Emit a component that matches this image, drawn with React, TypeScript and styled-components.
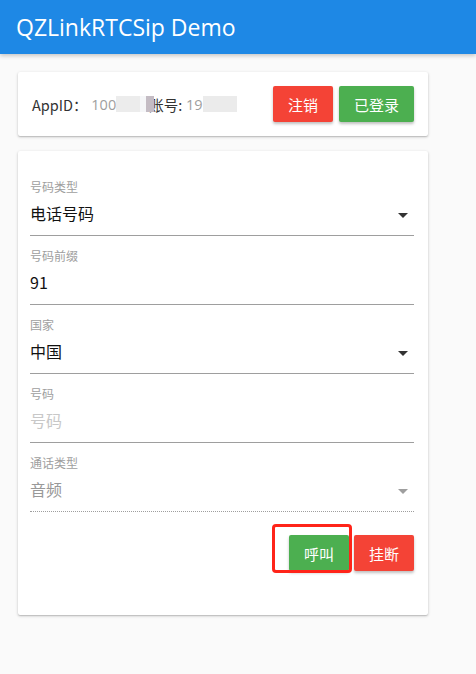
import React from "react";
import styled, { createGlobalStyle } from "styled-components";

const GlobalStyle = createGlobalStyle`
  html, body { margin: 0; padding: 0; background: #fafafa; }
  body {
    font-family: "Open Sans", "Noto Sans CJK SC", sans-serif;
    color: #333;
    width: 476px;
    min-height: 674px;
  }
  * { box-sizing: border-box; }
`;

const Header = styled.header`
  height: 54px;
  background: #1e88e5;
  display: flex;
  align-items: center;
  padding-left: 16px;
  box-shadow: 0 2px 4px rgba(0, 0, 0, 0.2);
`;

const Title = styled.h1`
  margin: 0;
  font-family: "Open Sans", "Noto Sans CJK SC", sans-serif;
  font-weight: 400;
  font-size: 23px;
  color: #fff;
`;

const Main = styled.main`
  width: 410px;
  margin: 18px 0 0 18px;
  display: flex;
  flex-direction: column;
  gap: 15px;
`;

const Card = styled.section`
  background: #fff;
  border-radius: 2px;
  box-shadow: 0 1px 3px rgba(0, 0, 0, 0.22), 0 1px 1px rgba(0, 0, 0, 0.1);
`;

const LoginCard = styled(Card)`
  height: 64px;
  display: flex;
  align-items: center;
  justify-content: space-between;
  padding: 0 14px 0 14px;
`;

const Info = styled.div`
  display: flex;
  align-items: center;
  font-size: 14.5px;
`;

const Dark = styled.span`
  color: #333;
  font-family: "Noto Sans CJK SC", sans-serif;
`;

const Grey = styled.span`
  color: #9e9e9e;
`;

const MaskedWord = styled.span`
  position: relative;
  color: #333;
  font-family: "Noto Sans CJK SC", sans-serif;
  margin-left: -5px;
`;

const Cover = styled.span`
  position: absolute;
  left: -3px;
  top: 50%;
  transform: translateY(-50%);
  width: 8px;
  height: 16px;
  background: #c4bcc4;
`;

const Mask = styled.span<{ $w: number; $c: string }>`
  display: inline-block;
  width: ${(p) => p.$w}px;
  height: 16px;
  background: ${(p) => p.$c};
`;

const ButtonRow = styled.div<{ $gap: number }>`
  display: flex;
  gap: ${(p) => p.$gap}px;
  justify-content: flex-end;
`;

const Button = styled.button<{ $color: string; $w: number }>`
  width: ${(p) => p.$w}px;
  height: 36px;
  border: none;
  border-radius: 2px;
  background: ${(p) => p.$color};
  color: #fff;
  font-family: "Noto Sans CJK SC", sans-serif;
  font-size: 15px;
  padding: 0;
  box-shadow: 0 2px 3px rgba(0, 0, 0, 0.25);
`;

const FormCard = styled(Card)`
  padding: 16px 14px 44px 12px;
`;

const Field = styled.div<{ $dotted?: boolean }>`
  border-bottom: 1px ${(p) => (p.$dotted ? "dotted" : "solid")} #9e9e9e;
  padding-top: 13px;
`;

const Label = styled.div`
  font-family: "Noto Sans CJK SC", sans-serif;
  font-size: 12px;
  line-height: 14px;
  color: #9e9e9e;
`;

const ValueRow = styled.div`
  height: 41px;
  padding-bottom: 3px;
  display: flex;
  align-items: center;
  justify-content: space-between;
  padding-right: 6px;
`;

const Value = styled.span<{ $tone: "dark" | "muted" | "placeholder" }>`
  font-family: "Noto Sans CJK SC", sans-serif;
  font-size: 16px;
  color: ${(p) =>
    p.$tone === "dark" ? "#111" : p.$tone === "muted" ? "#999" : "#c8c8c8"};
`;

const Arrow = styled.span<{ $muted?: boolean }>`
  width: 0;
  height: 0;
  border-left: 5px solid transparent;
  border-right: 5px solid transparent;
  border-top: 5px solid ${(p) => (p.$muted ? "#9e9e9e" : "#333")};
  margin-top: 4px;
`;

const Actions = styled(ButtonRow)`
  margin-top: 23px;
`;

const CallWrap = styled.div`
  position: relative;
  display: flex;
`;

const Highlight = styled.div`
  position: absolute;
  left: -17px;
  top: -11px;
  width: 80px;
  height: 49px;
  border: 3px solid #ff2419;
  border-radius: 4px;
  pointer-events: none;
`;

type FieldDef = {
  label: string;
  value: string;
  tone: "dark" | "muted" | "placeholder";
  select?: boolean;
  muted?: boolean;
  dotted?: boolean;
};

const fields: FieldDef[] = [
  { label: "号码类型", value: "电话号码", tone: "dark", select: true },
  { label: "号码前缀", value: "91", tone: "dark" },
  { label: "国家", value: "中国", tone: "dark", select: true },
  { label: "号码", value: "号码", tone: "placeholder" },
  { label: "通话类型", value: "音频", tone: "muted", select: true, muted: true, dotted: true },
];

export default function App() {
  return (
    <>
      <GlobalStyle />
      <Header>
        <Title>QZLinkRTCSip Demo</Title>
      </Header>
      <Main>
        <LoginCard>
          <Info>
            <Dark>AppID：</Dark>
            <Grey>&nbsp;100</Grey>
            <Mask $w={24} $c="#ececec" />
            <Mask $w={14} $c="#f5f6f8" />
            <MaskedWord>
              账号:
              <Cover />
            </MaskedWord>
            <Grey>&nbsp;19</Grey>
            <Mask $w={34} $c="#ebebeb" />
          </Info>
          <ButtonRow $gap={6}>
            <Button $color="#f44336" $w={60}>注销</Button>
            <Button $color="#4caf50" $w={75}>已登录</Button>
          </ButtonRow>
        </LoginCard>
        <FormCard>
          {fields.map((f) => (
            <Field key={f.label} $dotted={f.dotted}>
              <Label>{f.label}</Label>
              <ValueRow>
                <Value $tone={f.tone}>{f.value}</Value>
                {f.select && <Arrow $muted={f.muted} />}
              </ValueRow>
            </Field>
          ))}
          <Actions $gap={5}>
            <CallWrap>
              <Button $color="#4caf50" $w={60}>呼叫</Button>
              <Highlight />
            </CallWrap>
            <Button $color="#f44336" $w={60}>挂断</Button>
          </Actions>
        </FormCard>
      </Main>
    </>
  );
}
